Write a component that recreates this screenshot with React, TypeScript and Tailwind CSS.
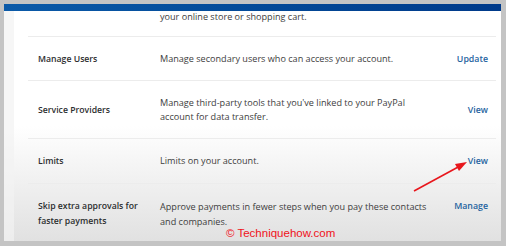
import React from "react";

const rows = [
  { label: ["Manage Users"], desc: ["Manage secondary users who can access your account."], action: "Update", h: "h-[44px]" },
  { label: ["Service Providers"], desc: ["Manage third-party tools that you've linked to your PayPal", "account for data transfer."], action: "View", h: "h-[58px]" },
  { label: ["Limits"], desc: ["Limits on your account."], action: "View", h: "h-[45px]" },
];

function Lines({ lines }: { lines: string[] }) {
  return (
    <>
      {lines.map((l) => (
        <div key={l} className="whitespace-nowrap">{l}</div>
      ))}
    </>
  );
}

export default function App() {
  return (
    <div className="w-[506px] h-[246px] bg-[#c4c4c4] pt-[4px] pl-[4px] pr-[5px] pb-[5px] overflow-hidden" style={{ fontFamily: '"Open Sans", sans-serif' }}>
      <div className="relative flex flex-col w-full h-full overflow-hidden">
        <div className="h-[7px] bg-gradient-to-r from-[#0b5aa8] to-[#003a8a]" />
        <div className="flex-1 flex bg-gradient-to-b from-white via-white to-[#e1e1e1]">
          <div className="w-[10px] bg-[#f2f2f2]/70" />
          <div className="flex-1 pl-[14px] pr-[5px] text-[9.1px] leading-[14px]">
            <div className="flex border-b border-[#ececec] h-[26px]">
              <div className="w-[132px]" />
              <div className="-mt-[1px] text-[#3d3d3d]">your online store or shopping cart.</div>
            </div>
            {rows.map((r) => (
              <div key={r.action + r.h} className={`flex items-center border-b border-[#ececec] ${r.h}`}>
                <div className="w-[132px] pl-[10px] font-semibold text-[8.7px] text-[#2c2e2f]"><Lines lines={r.label} /></div>
                <div className="w-[260px] text-[#3d3d3d]"><Lines lines={r.desc} /></div>
                <div className="flex-1 text-right pr-[8px] font-semibold text-[8.8px] text-[#1f64a0]">{r.action}</div>
              </div>
            ))}
            <div className="flex pt-[15px] leading-[15px]">
              <div className="w-[132px] pl-[10px] font-semibold text-[8.7px] text-[#2c2e2f]">
                <Lines lines={["Skip extra approvals for", "faster payments"]} />
              </div>
              <div className="w-[260px] text-[#3d3d3d]">
                <Lines lines={["Approve payments in fewer steps when you pay these contacts", "and companies."]} />
              </div>
              <div className="flex-1 text-right pr-[8px] font-semibold text-[8.8px] text-[#1f64a0]">Manage</div>
            </div>
          </div>
        </div>
        <svg className="absolute left-0 top-0" width="497" height="237" viewBox="0 0 497 237">
          <line x1="410" y1="187" x2="456" y2="162" stroke="#e8161c" strokeWidth="1.6" />
          <polygon points="463,158 451,160 455,167" fill="#e8161c" />
        </svg>
        <div className="absolute left-[222px] top-[221px] text-[11.5px] leading-[16px] text-[#f0121a]" style={{ fontFamily: '"Liberation Sans", sans-serif' }}>
          © Techniquehow.com
        </div>
      </div>
    </div>
  );
}
